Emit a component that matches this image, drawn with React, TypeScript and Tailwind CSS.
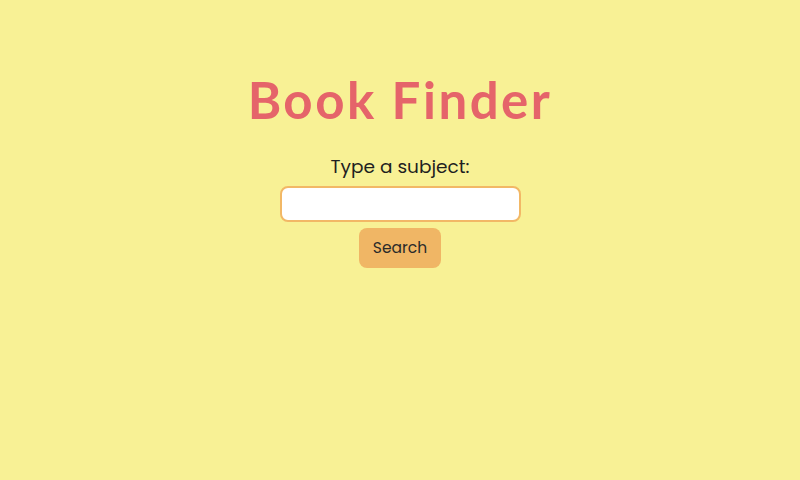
import React, { useState } from 'react';

const App: React.FC = () => {
  const [subject, setSubject] = useState('');

  return (
    <div className="min-h-[480px] w-full bg-[#f8f195] flex flex-col items-center font-['Poppins','Open_Sans',sans-serif] text-[#1f1f1f]">
      <h1 className="mt-[64px] text-[51px] leading-[72px] font-bold text-[#e5646a] font-['Lato',sans-serif] tracking-[2.5px]">
        Book Finder
      </h1>
      <label htmlFor="subject" className="mt-[17px] text-[18.5px] leading-[28px]">
        Type a subject:
      </label>
      <input
        id="subject"
        value={subject}
        onChange={(e) => setSubject(e.target.value)}
        className="mt-[5px] w-[241px] h-[36px] bg-white border-2 border-[#f2b866] rounded-[8px] px-2 outline-none"
      />
      <button className="mt-[6px] w-[82px] h-[40px] bg-[#f0b665] rounded-[8px] text-[15.5px] text-[#2a2a2a]">
        Search
      </button>
    </div>
  );
};

export default App;
